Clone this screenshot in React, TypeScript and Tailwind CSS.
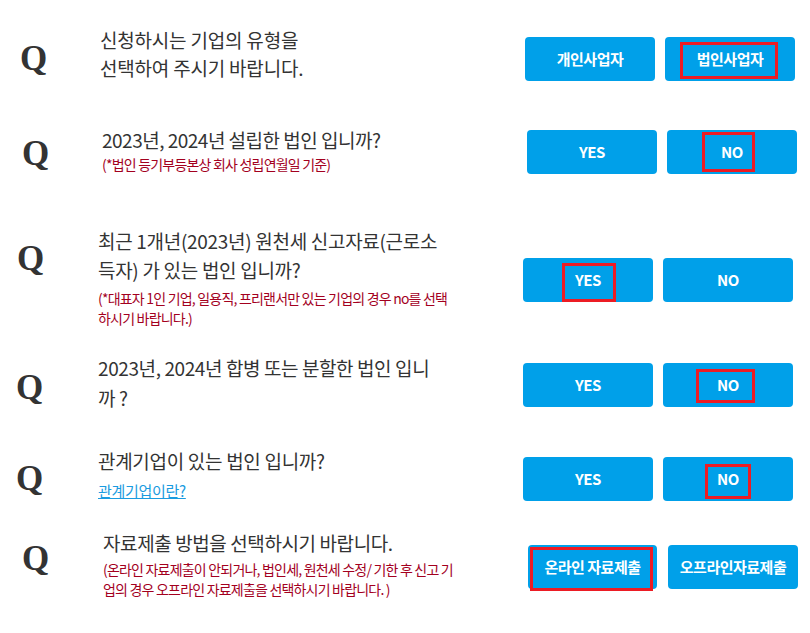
import React from 'react';

const kr = { fontFamily: '"Noto Sans CJK KR", "Noto Sans", sans-serif' };

interface BtnProps {
    label: string;
    marked?: boolean;
    boxClass?: string;
    className?: string;
}

const ChoiceButton: React.FC<BtnProps> = ({ label, marked, boxClass, className }) => (
    <div className={`relative h-[44px] rounded-[4px] bg-[#00a0e9] flex items-center justify-center text-white text-[15px] font-bold tracking-[-0.5px] ${className ?? 'w-[130px]'}`}>
        {label}
        {marked && <div className={`absolute border-[3px] border-[#ec1c24] ${boxClass}`} />}
    </div>
);

const Q: React.FC<{ className: string }> = ({ className }) => (
    <div className={`w-[100px] shrink-0 ${className}`}>
        <span className="text-[35px] leading-none font-bold text-[#333]" style={{ fontFamily: '"Liberation Serif", serif' }}>Q</span>
    </div>
);

const App: React.FC = () => {
    return (
        <div className="w-[810px] h-[633px] bg-white overflow-hidden flex flex-col" style={kr}>
            {/* 기업 유형 */}
            <div className="flex items-start h-[120px]">
                <Q className="pl-[20px] mt-[41px]" />
                <div className="mt-[26px] text-[19px] leading-[28px] text-[#333] tracking-[-0.2px] whitespace-nowrap">
                    신청하시는 기업의 유형을<br />선택하여 주시기 바랍니다.
                </div>
                <div className="ml-auto mr-[15px] mt-[37px] flex gap-[10px]">
                    <ChoiceButton label="개인사업자" />
                    <ChoiceButton label="법인사업자" marked boxClass="left-[15px] top-[5px] w-[98px] h-[37px]" />
                </div>
            </div>

            {/* 설립 연도 */}
            <div className="flex items-start h-[100px]">
                <Q className="pl-[22px] mt-[16px]" />
                <div className="ml-[2px] mt-[5px] whitespace-nowrap">
                    <div className="text-[19px] leading-[29px] text-[#333] tracking-[-0.5px]">2023년, 2024년 설립한 법인 입니까?</div>
                    <div className="text-[14px] leading-[20px] text-[#a3001e] tracking-[-0.8px]">(*법인 등기부등본상 회사 성립연월일 기준)</div>
                </div>
                <div className="ml-auto mr-[13px] mt-[10px] flex gap-[10px]">
                    <ChoiceButton label="YES" />
                    <ChoiceButton label="NO" marked boxClass="left-[35px] top-[2px] w-[53px] h-[40px]" />
                </div>
            </div>

            {/* 원천세 신고자료 */}
            <div className="flex items-start h-[120px]">
                <Q className="pl-[17px] mt-[21px]" />
                <div className="ml-[-2px] mt-[6px] whitespace-nowrap">
                    <div className="text-[19px] leading-[29px] text-[#333] tracking-[-0.3px]">
                        최근 1개년(2023년) 원천세 신고자료(근로소<br />득자) 가 있는 법인 입니까?
                    </div>
                    <div className="mt-[4px] text-[14px] leading-[20px] text-[#a3001e] tracking-[-0.8px]">
                        (*대표자 1인 기업, 일용직, 프리랜서만 있는 기업의 경우 no를 선택<br />하시기 바랍니다.)
                    </div>
                </div>
                <div className="ml-auto mr-[17px] mt-[38px] flex gap-[10px]">
                    <ChoiceButton label="YES" marked boxClass="left-[39px] top-[5px] w-[54px] h-[39px]" />
                    <ChoiceButton label="NO" />
                </div>
            </div>

            {/* 합병/분할 */}
            <div className="flex items-start h-[100px]">
                <Q className="pl-[16px] mt-[30px]" />
                <div className="ml-[-2px] mt-[13px] whitespace-nowrap text-[19px] leading-[30px] text-[#333] tracking-[-0.4px]">
                    2023년, 2024년 합병 또는 분할한 법인 입니<br />까 ?
                </div>
                <div className="ml-auto mr-[17px] mt-[23px] flex gap-[10px]">
                    <ChoiceButton label="YES" />
                    <ChoiceButton label="NO" marked boxClass="left-[33px] top-[6px] w-[59px] h-[34px]" />
                </div>
            </div>

            {/* 관계기업 */}
            <div className="flex items-start h-[80px]">
                <Q className="pl-[16px] mt-[21px]" />
                <div className="ml-[-2px] mt-[6px] whitespace-nowrap">
                    <div className="text-[19px] leading-[29px] text-[#333] tracking-[-0.3px]">관계기업이 있는 법인 입니까?</div>
                    <a href="#" className="block mt-[6px] text-[15px] leading-[20px] text-[#1a9be0] underline tracking-[-0.3px]">관계기업이란?</a>
                </div>
                <div className="ml-auto mr-[17px] mt-[17px] flex gap-[10px]">
                    <ChoiceButton label="YES" />
                    <ChoiceButton label="NO" marked boxClass="left-[42px] top-[7px] w-[46px] h-[35px]" />
                </div>
            </div>

            {/* 자료제출 방법 */}
            <div className="flex items-start h-[113px]">
                <Q className="pl-[22px] mt-[21px]" />
                <div className="ml-[3px] mt-[8px] whitespace-nowrap">
                    <div className="text-[19px] leading-[29px] text-[#333] tracking-[-0.4px]">자료제출 방법을 선택하시기 바랍니다.</div>
                    <div className="mt-[2px] text-[14px] leading-[20px] text-[#a3001e] tracking-[-0.8px]">
                        (온라인 자료제출이 안되거나, 법인세, 원천세 수정/ 기한 후 신고 기<br />업의 경우 오프라인 자료제출을 선택하시기 바랍니다. )
                    </div>
                </div>
                <div className="ml-auto mr-[12px] mt-[25px] flex gap-[11px]">
                    <ChoiceButton label="온라인 자료제출" className="w-[129px]" marked boxClass="left-[2px] top-[2px] w-[123px] h-[44px]" />
                    <ChoiceButton label="오프라인자료제출" />
                </div>
            </div>
        </div>
    );
};

export default App;
